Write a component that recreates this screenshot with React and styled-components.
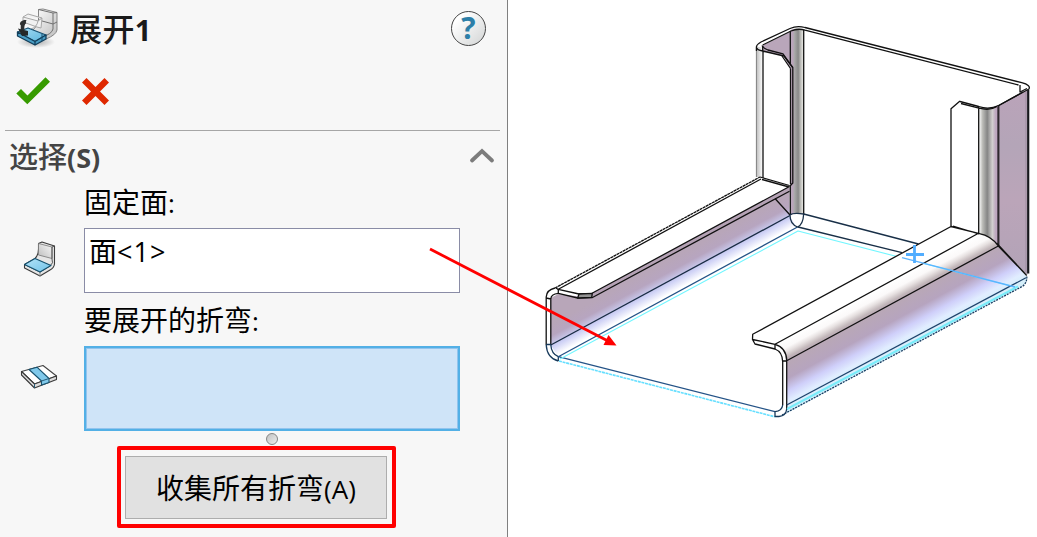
import React from 'react';
import styled, { createGlobalStyle } from 'styled-components';

const GlobalStyle = createGlobalStyle`
  *, *::before, *::after { box-sizing: border-box; }
  body { margin: 0; background: #fff; overflow: hidden; }
  svg { display: block; flex: none; }
`;

const Screen = styled.main`
  position: relative;
  display: flex;
  width: 1037px;
  height: 537px;
  overflow: hidden;
  background: #fff;
  color: #000;
  font-family: "Open Sans", "Noto Sans CJK SC", sans-serif;
`;

const Panel = styled.aside`
  display: flex;
  flex-direction: column;
  flex: none;
  width: 508px;
  height: 537px;
  background: #f7f7f7;
  border-right: 1px solid #808080;
`;

const Header = styled.header`
  display: flex;
  align-items: flex-start;
  height: 66px;
  padding: 6px 21px 0 15px;
`;

const Title = styled.h1`
  flex: 1;
  margin: 0 0 0 11px;
  color: #1a1a1a;
  font-size: 29px;
  line-height: 43px;
  font-weight: 700;
  white-space: nowrap;
`;

const Han = styled.span`
  font-family: "Noto Sans CJK SC", sans-serif;
  font-size: ${(p) => p.$size}px;
  font-weight: ${(p) => p.$weight || 400};
  letter-spacing: ${(p) => p.$track || 0}px;
`;

const Help = styled.button`
  display: flex;
  align-items: center;
  justify-content: center;
  width: 35px;
  height: 35px;
  margin-top: 5px;
  padding: 0 0 1px;
  border: 1.5px solid #454545;
  border-radius: 50%;
  background: linear-gradient(135deg, #fff 20%, #d2d4d4);
  color: #2d7fa8;
  font: 700 30px/32px "Open Sans", sans-serif;
`;

const Actions = styled.div`
  display: flex;
  gap: 31px;
  height: 64px;
  padding: 11px 0 0 16px;
`;

const Section = styled.section`
  display: flex;
  flex-direction: column;
  margin: 0 7px 0 5px;
  border-top: 1px solid #a6a6a6;
`;

const SectionHead = styled.div`
  display: flex;
  align-items: flex-start;
  justify-content: space-between;
  height: 50px;
  padding: 4px 5px 0 4px;
`;

const SectionTitle = styled.h2`
  margin: 0;
  color: #444;
  font-size: 27px;
  line-height: 40px;
  font-weight: 700;
  white-space: nowrap;
`;

const Chevron = styled.svg`
  margin-top: 11px;
`;

const Label = styled.label`
  height: ${(p) => p.$height}px;
  padding: ${(p) => p.$top || 0}px 0 0 79px;
  font-size: 26px;
  line-height: 40px;
  white-space: nowrap;
`;

const Field = styled.div`
  display: flex;
  align-items: flex-start;
`;

const FieldIcon = styled.div`
  flex: none;
  width: 79px;
  padding: ${(p) => p.$top}px 0 0 ${(p) => p.$left}px;
`;

const SelectionBox = styled.div`
  width: 376px;
  height: ${(p) => (p.$active ? 85 : 65)}px;
  padding: 0 4px;
  border: ${(p) => (p.$active ? '2px solid #53b0e6' : '1px solid #8a8ca6')};
  background: ${(p) => (p.$active ? '#cfe4f8' : '#fff')};
  box-shadow: ${(p) => (p.$active ? 'inset 0 0 0 1px #93c4ee' : 'none')};
  font-size: 27px;
  letter-spacing: 1.1px;
  line-height: 42px;
  white-space: nowrap;
`;

const Grip = styled.div`
  width: 12px;
  height: 12px;
  margin: 2px 0 0 261px;
  border: 1px solid #858585;
  border-radius: 50%;
  background: linear-gradient(135deg, #c2c2c2, #ececec);
`;

const Highlight = styled.div`
  display: flex;
  width: 279px;
  height: 82px;
  margin: 1px 0 0 112px;
  padding: 6px 5px 5px 4px;
  border: 4px solid #f00;
  border-radius: 2px;
`;

const CollectButton = styled.button`
  flex: 1;
  padding: 0;
  border: 1px solid #adadad;
  background: #e1e1e1;
  color: #000;
  font: 400 26px/61px "Open Sans", sans-serif;
  white-space: nowrap;
`;

const Canvas = styled.section`
  flex: none;
  width: 529px;
  height: 537px;
  background: #fff;
`;

const Callout = styled.svg`
  position: absolute;
  left: 425px;
  top: 243px;
  pointer-events: none;
`;

const UnfoldIcon = () => (
  <svg width="44" height="44" viewBox="15 6 44 44" fill="none" strokeLinejoin="round">
    <defs>
      <linearGradient id="uBlue" x1="0" y1="0" x2="1" y2="1">
        <stop offset="0" stopColor="#a9ddf5" /><stop offset="1" stopColor="#5ab4dc" />
      </linearGradient>
      <linearGradient id="uGrey" x1="0" y1="0" x2="1" y2="1">
        <stop offset="0" stopColor="#fff" /><stop offset="1" stopColor="#bdbdbd" />
      </linearGradient>
      <radialGradient id="uShadow"><stop offset="0" stopColor="#aaa" /><stop offset="1" stopColor="#aaa" stopOpacity="0" /></radialGradient>
    </defs>
    <ellipse cx="36" cy="42" rx="19" ry="6" fill="url(#uShadow)" />
    <path d="M38.5 9.5 43 9 57 12.5V30Q56 35 46 39L41 36 33 30Q38 26 38.5 20Z" fill="url(#uGrey)" stroke="#858585" />
    <path d="M38.5 9.5 53 13V29Q52 34 42 37M53 13 57 12.5M38.5 20 53 24 57 22" stroke="#707070" />
    <path d="M23 17 28 14 42 18 41 28 37 27 23 22ZM23 17 38 21 42 18M38 21Q37 27 31 29" stroke="#a7a7a7" fill="#f1f1f1" />
    <path d="M17.5 32 28 28 46 35 35 41.5Z" fill="url(#uBlue)" stroke="#174f70" strokeWidth="1.3" />
    <path d="M17.5 32V36L35 45V41.5ZM35 41.5V45L46 39V35Z" fill="#4a9dc4" stroke="#123f5b" strokeWidth="1.3" />
    <path d="M42 34V41" stroke="#174f70" />
    <path d="M26.5 20Q25 25 21.5 26Q18.5 24 21 21.5Q23 19.5 26.5 20Z" fill="#2e3031" />
    <path d="M25.5 21.5Q22 23 22.5 30" stroke="#2e3031" strokeWidth="3.7" />
    <path d="M18 28.5 28 31V35.5L22 36Z" fill="#252829" />
  </svg>
);

const FaceIcon = () => (
  <svg width="40" height="40" viewBox="20 240 40 40" fill="none" strokeLinejoin="round">
    <defs>
      <linearGradient id="fBlue" x1="0" y1="0" x2="1" y2="1"><stop offset="0" stopColor="#b4e3f8" /><stop offset="1" stopColor="#6fc2e8" /></linearGradient>
      <linearGradient id="fBack" x1="1" y1="0" x2="0" y2="1"><stop offset="0" stopColor="#f9f9f9" /><stop offset="1" stopColor="#bcbcbc" /></linearGradient>
    </defs>
    <path d="M38.5 243.5 42 242 54.5 246V264Q54 268 50 270L40 276 24.5 268V264.5L35 258.5Q38.5 255 38.5 249Z" fill="#e6e6e6" stroke="#3c3c3c" strokeWidth="1.1" />
    <path d="M38.5 243.5 52 247V258.5L38.5 255Z" fill="url(#fBack)" stroke="#777" strokeWidth=".8" />
    <path d="M52 247V259Q54 263 50 266M52 247 54.5 246M24.5 264.5 40 272 50 266" stroke="#555" />
    <path d="M40 272V276" stroke="#888" />
    <path d="M24.5 264.5 35 258.5 51 265.5 40 272Z" fill="url(#fBlue)" stroke="#14516f" strokeWidth="1.1" />
  </svg>
);

const BendIcon = () => (
  <svg width="42" height="34" viewBox="18 360 42 34" fill="none" strokeLinejoin="round">
    <path d="M22 375 34 388 57 380V377Z" fill="#bbb" opacity=".35" />
    <path d="M21.5 371.5 43 365.5 56.5 376 34.5 384Z" fill="#fff" stroke="#444" strokeWidth="1.1" />
    <path d="M21.5 371.5V375L34.5 388 56.5 379.5V376L34.5 384Z" fill="#ddd" stroke="#3b3b3b" strokeWidth="1.1" />
    <path d="M29 369.5 37 367.2 49 378.5V382.5L41.5 385V381Z" fill="#80c9eb" stroke="#17516e" strokeWidth="1.1" />
    <path d="M41.5 381 49 378.5M34.5 384V388" stroke="#285c76" />
  </svg>
);

/* Sheet-metal bracket: a base, two side walls with lips, and a back wall with flanges. */
const PartView = () => (
  <svg width="529" height="537" viewBox="508 0 529 537" fill="none" stroke="#111" strokeWidth="1.3" strokeLinejoin="round">
    <defs>
      <linearGradient id="wallL" gradientUnits="userSpaceOnUse" x1="592" y1="302" x2="607.5" y2="330.6">
        <stop offset="0" stopColor="#b8a6b9" /><stop offset=".32" stopColor="#b7a5c0" />
        <stop offset=".62" stopColor="#cccff5" /><stop offset=".92" stopColor="#fff" />
      </linearGradient>
      <linearGradient id="wallR" gradientUnits="userSpaceOnUse" x1="787" y1="360.7" x2="808" y2="399.3">
        <stop offset="0" stopColor="#b9a8b6" /><stop offset=".36" stopColor="#b6a4bf" />
        <stop offset=".62" stopColor="#cfcffa" /><stop offset=".82" stopColor="#e1edff" /><stop offset="1" stopColor="#d5effa" />
      </linearGradient>
      <linearGradient id="bendR" gradientUnits="userSpaceOnUse" x1="787" y1="337.8" x2="796.6" y2="355.6">
        <stop offset="0" stopColor="#fff" /><stop offset=".4" stopColor="#fbf9f9" /><stop offset=".6" stopColor="#e6e0e0" /><stop offset=".85" stopColor="#c1b6b9" /><stop offset="1" stopColor="#baa7b5" />
      </linearGradient>
      <linearGradient id="bendBackL">
        <stop offset="0" stopColor="#bca7be" /><stop offset=".23" stopColor="#b8a5b9" /><stop offset=".32" stopColor="#aaa" />
        <stop offset=".6" stopColor="#898989" /><stop offset=".8" stopColor="#c2c2be" /><stop offset="1" stopColor="#f1f1ed" />
      </linearGradient>
      <linearGradient id="bendBackR">
        <stop offset="0" stopColor="#fff" /><stop offset=".18" stopColor="#bcbcb8" /><stop offset=".42" stopColor="#858585" />
        <stop offset=".68" stopColor="#d2cfcf" /><stop offset=".85" stopColor="#bda6bf" /><stop offset="1" stopColor="#c3abc5" />
      </linearGradient>
      <linearGradient id="edgeL"><stop offset="0" stopColor="#bbb" /><stop offset="1" stopColor="#fff" /></linearGradient>
      <linearGradient id="faceR" x1="0" y1="0" x2="0" y2="1">
        <stop offset="0" stopColor="#baa3b9" /><stop offset=".3" stopColor="#b4a5b8" /><stop offset=".6" stopColor="#bba5b9" /><stop offset="1" stopColor="#b2a3b7" />
      </linearGradient>
    </defs>

    <g stroke="none">
      <path d="M762.7 45.5 791 31.5V70L783.3 55.7 762.7 50.7Z" fill="#b9a6ba" />
      <path d="M790.3 30Q796 27 803.7 30V214Q797 212 790 215Z" fill="url(#bendBackL)" />
      <path d="M756.3 47H762.7V177H756.3Z" fill="url(#edgeL)" />
      <path d="M550.7 298 558.3 294 592 298 789.5 188V216L797 227 558.3 357 550.7 345Z" fill="url(#wallL)" />
      <path d="M979 107Q989 110 998.7 106V246L979 234Z" fill="url(#bendBackR)" />
      <path d="M998.7 105.5 1027.3 90V275L998.7 245.5Z" fill="url(#faceR)" />
      <path d="M775 344.3 978.5 233.3Q991 236 998.3 246L786.7 360.7Q785 349 775 344.3Z" fill="url(#bendR)" />
      <path d="M786.7 360.7 998.3 246 1026.7 276Q1028 282 1022 286L787 413.3Z" fill="url(#wallR)" />
      <path d="M558.3 289.3 760.7 178 789.3 186 592 293.3 579 294Z" fill="#fff" />
      <path d="M592 293.3 789.5 186.5V191L592 298Z" fill="#b5a2b5" />
    </g>

    <path d="M756.4 51V47Q757 44 761 42L790 28.5Q797 25.2 805 27.5L1021.7 82.7Q1031 85 1029 89L998.7 105.5Q989 110 978.7 106.5L960 101.5" />
    <path d="M756.4 51V177" stroke="#777" strokeWidth=".9" />
    <path d="M762.7 45 791 31Q798 28 805 30.2L1018.5 85M960 101 951 108.8V226.5" />
    <path d="M757 48Q757 50 762.7 51L784 56 792.8 67.5V183L789.5 186.5M762.7 46V51M790.5 68.5V184M763 51V178M790.3 31V65M790.3 185V215M803.7 30V214" />
    <path d="M762 45.5Q763 48 768 50L783 53.8 792.6 67.5M782 56 790.5 68.5" />
    <path d="M961 103.5 979 108.2Q990 111 997 106.5L1023 92M978.7 107V233M998.7 106V245.5M1020 85V92L1027 88.5" />
    <path d="M997.7 106V245" stroke="#5a4c5b" />
    <path d="M1028.2 90V273.5" stroke="#17171c" strokeWidth="2.2" />
    <path d="M1026 91.5V274" stroke="#938496" strokeWidth=".7" />

    <path d="M555 288 760 177" strokeDasharray="3 .5" />
    <path d="M558.3 289.3 761 179M760 177 789.5 185.5M762 179.5 789 187M789.5 186.5 592 293.3 579 294 558.3 289.3V293.3L577.7 298 592 297.7 789.5 191.2M775 198.5 790 215" />
    <path d="M579 294 592.3 293.3 591.7 297.3 577.7 298Z" fill="#929292" />
    <path d="M555 288Q546.5 290 546.2 297V345M558.3 293.3Q551 294 550.8 299V345M546 298 551 299M556 288 559 290" />
    <path d="M550.8 345 790 215.5" stroke="#182b43" />
    <path d="M546.2 345Q547 358 558.3 361M550.8 345Q551.5 354 558.3 356.7V361M546.2 344.5H550.8" stroke="#16395b" />
    <path d="M558.3 356.7 797.5 227M558.3 356.7 775 411.7" stroke="#245387" />
    <path d="M560 359 798 231 1015 287" stroke="#72f6ff" strokeWidth="1.1" />
    <path d="M559 361 775 416.8" stroke="#66dfff" strokeWidth="1.6" strokeDasharray="3 .7" />
    <path d="M790 215Q793 212.5 803.7 214Q803 225 797.5 227Q790 224 790 215ZM803.7 214 918.5 244M798 227 902 252.7" stroke="#182f47" />

    <path d="M752.7 334.3 951 226.5 978.5 233.3 775 344.3 752.5 339.5Z" fill="#fff" stroke="none" />
    <path d="M752.7 334.3 951 226.5 978.5 233.3 775 344.3 752.5 339.5ZM752.5 339.5 755 344 775 349V344.3M953 226 979 234" />
    <path d="M978.5 233.3Q992 236 998.3 246L1026.7 275.5M996.5 243 1024.5 273" />
    <path d="M775 344.3Q786.5 347.5 786.7 360.7L998.3 246M786.7 360.7V410M775 349Q782.5 352 782.7 361.7V405M782.7 361H786.7" />
    <path d="M782.7 405Q782 411 775 411.7V416.5H779Q786 416 786.7 409" stroke="#16395b" />
    <path d="M786.7 405 1026 277.8" stroke="#1d426b" />
    <path d="M787 409 1018 286.5" stroke="#79ecfa" strokeWidth="2" />
    <path d="M782 415 1023 286Q1027.5 282 1026.7 275.5" stroke="#183d61" strokeDasharray="2 1" />
    <path d="M902 257.7 1015 287" stroke="#5cb4ff" />
    <path d="M906 254.5H924M914.5 245V263" stroke="#51adff" strokeWidth="2.8" />
  </svg>
);

export default function App() {
  return (
    <>
      <GlobalStyle />
      <Screen>
        <Panel>
          <Header>
            <UnfoldIcon />
            <Title><Han $size={32} $weight={500} $track={0.4}>展开</Han>1</Title>
            <Help aria-label="帮助">?</Help>
          </Header>
          <Actions>
            <svg width="35" height="29" viewBox="16 77 35 29"><path d="M16.3 93.5 21 89 27.5 95.5 45.5 77.2 50 81.7 27.3 104.3Z" fill="#379b00" /></svg>
            <svg width="27" height="28" viewBox="82 77 27 28"><path d="M82 82.5 86.5 78 95.5 87 104.5 78 109 82.5 100 91.5 109 100.5 104.5 105 95.5 96 86.5 105 82 100.5 91 91.5Z" fill="#df2800" /></svg>
          </Actions>
          <Section>
            <SectionHead>
              <SectionTitle><Han $size={29} $weight={500}>选择</Han>(S)</SectionTitle>
              <Chevron width="26" height="18" viewBox="469 146 26 18"><path d="M472 160.5 482 151 492 160.5" fill="none" stroke="#7c7c7c" strokeWidth="3.8" strokeLinecap="round" /></Chevron>
            </SectionHead>
            <Label $height={47}><Han $size={28}>固定面</Han>:</Label>
            <Field>
              <FieldIcon $top={12} $left={15}><FaceIcon /></FieldIcon>
              <SelectionBox><Han $size={28}>面</Han>&lt;1&gt;</SelectionBox>
            </Field>
            <Label $height={53} $top={6}><Han $size={28}>要展开的折弯</Han>:</Label>
            <Field>
              <FieldIcon $top={14} $left={13}><BendIcon /></FieldIcon>
              <SelectionBox $active />
            </Field>
            <Grip />
            <Highlight>
              <CollectButton><Han $size={28}>收集所有折弯</Han>(A)</CollectButton>
            </Highlight>
          </Section>
        </Panel>
        <Canvas><PartView /></Canvas>
        <Callout width="196" height="108" viewBox="425 243 196 108">
          <path d="M430 249 608 341" stroke="#f00" strokeWidth="2.8" />
          <path d="M616.5 345.5 603.5 345 608.5 335Z" fill="#f00" />
        </Callout>
      </Screen>
    </>
  );
}
